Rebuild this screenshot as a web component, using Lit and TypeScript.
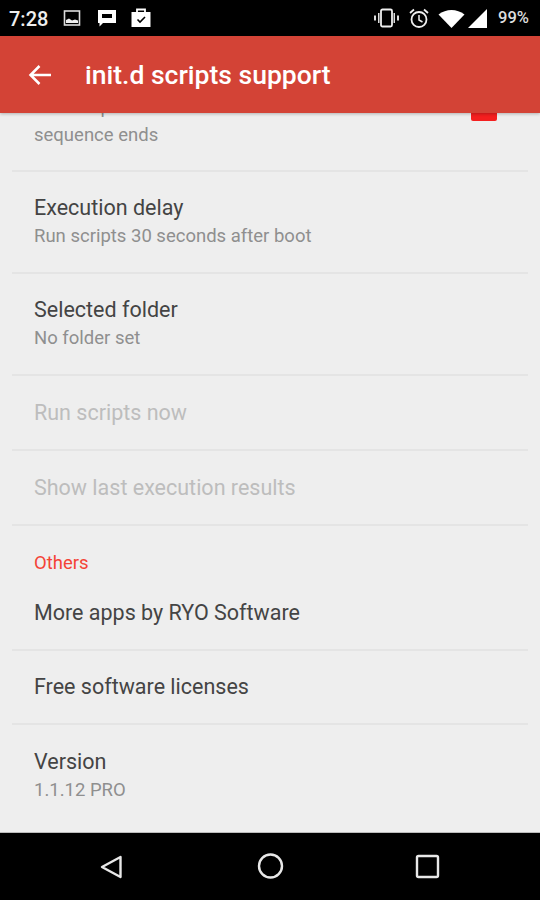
import { LitElement, html, css, svg } from "lit";
import { customElement } from "lit/decorators.js";

type Row = { title: string; summary?: string; disabled?: boolean; height: number };

const ROWS: Row[] = [
  { title: "Execution delay", summary: "Run scripts 30 seconds after boot", height: 102 },
  { title: "Selected folder", summary: "No folder set", height: 102 },
  { title: "Run scripts now", disabled: true, height: 75 },
  { title: "Show last execution results", disabled: true, height: 75 },
];

const OTHERS: Row[] = [
  { title: "More apps by RYO Software", height: 75 },
  { title: "Free software licenses", height: 74 },
  { title: "Version", summary: "1.1.12 PRO", height: 102 },
];

const statusLeft = svg`
  <svg class="ic" style="left:63px;top:9px" width="20" height="18" viewBox="0 0 20 18">
    <rect x="1.5" y="2" width="15" height="14" fill="none" stroke="#ddd" stroke-width="1.6" />
    <path d="M3 14v-3l3-1.500 3 2 3-1 3 1v2.500z" fill="#eee" />
  </svg>
  <svg class="ic" style="left:96px;top:8px" width="22" height="20" viewBox="0 0 22 20">
    <path d="M2 2h18v13H7l-3.500 3.500V15H2z" fill="#fff" />
    <rect x="6" y="6" width="10" height="4" fill="#000" />
  </svg>
  <svg class="ic" style="left:130px;top:7px" width="22" height="21" viewBox="0 0 22 21">
    <path d="M1.500 5h19v15h-19z" fill="#fff" />
    <path d="M7 6V2.500h8V6" fill="none" stroke="#fff" stroke-width="1.800" />
    <path d="M7.500 12.500l2.500 2.500 5-5" fill="none" stroke="#000" stroke-width="1.600" />
  </svg>`;

const statusRight = svg`
  <svg class="ic" style="left:373px;top:8px" width="27" height="20" viewBox="0 0 27 20">
    <rect x="8" y="1.500" width="11" height="17" rx="1.500" fill="none" stroke="#eee" stroke-width="1.800" />
    <path d="M5 5h1.500v10H5zM20.500 5H22v10h-1.500zM1 7.500h2v5H1zM24 7.500h2v5h-2z" fill="#ddd" />
  </svg>
  <svg class="ic" style="left:408px;top:7px" width="22" height="22" viewBox="0 0 22 22">
    <circle cx="11" cy="12.500" r="7.500" fill="none" stroke="#eee" stroke-width="1.800" />
    <path d="M11 8v5l3.500 2" fill="none" stroke="#eee" stroke-width="1.500" />
    <path d="M2 6l4-3.500M20 6l-4-3.500" stroke="#eee" stroke-width="1.800" />
  </svg>
  <svg class="ic" style="left:438px;top:9px" width="27" height="20" viewBox="0 0 27 20">
    <path d="M.5 5.500C8 -.5 19 -.5 26.500 5.500L13.500 19z" fill="#fff" />
  </svg>
  <svg class="ic" style="left:468px;top:8px" width="20" height="21" viewBox="0 0 20 21">
    <path d="M19 1v19H0z" fill="#fff" />
  </svg>`;

@customElement("app-root")
export class AppRoot extends LitElement {
  static override styles = css`
    :host {
      display: flex;
      flex-direction: column;
      width: 540px;
      height: 900px;
      overflow: hidden;
      background: #eeeeee;
      font-family: Roboto, "Liberation Sans", sans-serif;
    }

    .status {
      position: relative;
      flex: 0 0 36px;
      background: #000;
      color: #eee;
    }

    .ic {
      position: absolute;
    }

    .time {
      position: absolute;
      left: 9px;
      top: 7px;
      font-size: 20px;
      font-weight: 500;
      line-height: 24px;
    }

    .battery {
      position: absolute;
      left: 498px;
      top: 8px;
      font-size: 16.500px;
      font-weight: 500;
      line-height: 20px;
      color: #ddd;
    }

    .bar {
      position: relative;
      z-index: 2;
      flex: 0 0 77px;
      display: flex;
      align-items: center;
      gap: 32px;
      padding-left: 27px;
      box-sizing: border-box;
      background: #d34336;
      box-shadow: 0 1px 3px rgba(0, 0, 0, 0.25);
      color: #fff;
    }

    .bar svg {
      flex: none;
    }

    .bar h1 {
      margin: 0;
      font-size: 26.500px;
      font-weight: 500;
    }

    .list {
      flex: 1;
      min-height: 0;
      display: flex;
      flex-direction: column;
      overflow: hidden;
    }

    .row {
      flex: none;
      box-sizing: border-box;
      margin: 0 12px;
      padding: 0 22px;
      display: flex;
      flex-direction: column;
      justify-content: center;
      border-bottom: 2px solid #e4e4e4;
    }

    .row.last {
      border-bottom: 0;
    }

    .clipped {
      position: relative;
      justify-content: flex-end;
      height: 59px;
      padding-bottom: 21px;
      overflow: hidden;
    }

    .check {
      position: absolute;
      left: 459px;
      top: -18px;
      width: 26px;
      height: 26px;
      border-radius: 2px;
      background: #f41f1f;
    }

    .title {
      font-size: 21.500px;
      line-height: 28px;
      color: #444;
    }

    .summary {
      font-size: 18.500px;
      line-height: 28px;
      color: #8f8f8f;
    }

    .disabled .title {
      color: #bdbdbd;
    }

    .header {
      flex: none;
      height: 50px;
      padding-left: 34px;
      display: flex;
      align-items: flex-end;
      font-size: 18.500px;
      line-height: 26px;
      color: #f44336;
    }

    .nav {
      flex: 0 0 67px;
      display: flex;
      background: #000;
      border-top: 1px solid #bbb;
      box-sizing: content-box;
    }

    .nav svg {
      display: block;
    }
  `;

  private renderRow(row: Row, last = false) {
    return html`
      <div
        class="row ${row.disabled ? "disabled" : ""} ${last ? "last" : ""}"
        style="height: ${row.height}px"
      >
        <div class="title">${row.title}</div>
        ${row.summary ? html`<div class="summary">${row.summary}</div>` : null}
      </div>
    `;
  }

  override render() {
    return html`
      <div class="status">
        <span class="time">7:28</span>
        ${statusLeft} ${statusRight}
        <span class="battery">99%</span>
      </div>
      <div class="bar">
        <svg width="26" height="26" viewBox="0 0 26 26">
          <path
            d="M24 13H4M12.500 4L3.500 13l9 9"
            fill="none"
            stroke="#fff"
            stroke-width="2.500"
          />
        </svg>
        <h1>init.d scripts support</h1>
      </div>
      <div class="list">
        <div class="row clipped">
          <div class="check"></div>
          <div class="summary">Run scripts at selected folder after device boot</div>
          <div class="summary">sequence ends</div>
        </div>
        ${ROWS.map((r) => this.renderRow(r))}
        <div class="header">Others</div>
        ${OTHERS.map((r, i) => this.renderRow(r, i === OTHERS.length - 1))}
      </div>
      <div class="nav">
        <svg width="540" height="67" viewBox="0 0 540 67">
          <path
            d="M120.500 24L102 34l18.500 10z"
            fill="none"
            stroke="#e8e8e8"
            stroke-width="2.400"
            stroke-linejoin="round"
          />
          <circle cx="270.500" cy="33" r="11.500" fill="none" stroke="#e8e8e8" stroke-width="2.400" />
          <rect
            x="417"
            y="23"
            width="21"
            height="21"
            rx="1.500"
            fill="none"
            stroke="#e8e8e8"
            stroke-width="2.400"
          />
        </svg>
      </div>
    `;
  }
}

declare global {
  interface HTMLElementTagNameMap {
    "app-root": AppRoot;
  }
}
